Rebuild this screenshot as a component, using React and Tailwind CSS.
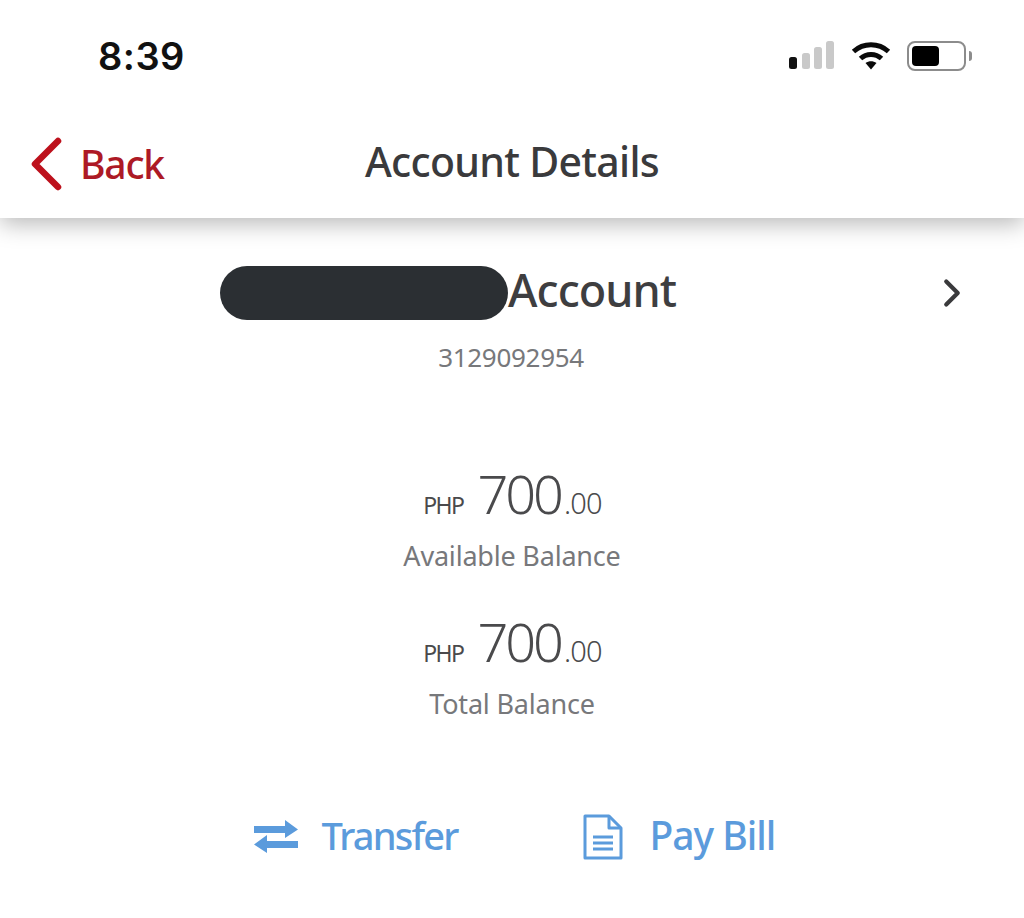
import { ChevronRight } from 'lucide-react'

const font = "font-['Noto_Sans',sans-serif]"

function SignalBars() {
  return (
    <svg width="46" height="30" viewBox="0 0 46 30">
      <rect x="0" y="16" width="8" height="12" rx="2.5" fill="#111" />
      <rect x="13" y="12" width="8" height="16" rx="2.5" fill="#c9c9c9" />
      <rect x="25" y="6" width="8" height="22" rx="2.5" fill="#c9c9c9" />
      <rect x="37" y="0" width="8" height="28" rx="2.5" fill="#c9c9c9" />
    </svg>
  )
}

function Wifi() {
  return (
    <svg width="40" height="30" viewBox="0 0 40 30" fill="none" stroke="#0a0a0a" strokeWidth="5">
      <path d="M2.5 10.5C12.5 1.5 27.5 1.5 37.5 10.5" />
      <path d="M9.5 17.5C15.5 12 24.5 12 30.5 17.5" />
      <path d="M14.5 22L20 28.5L25.5 22C22 19.5 18 19.5 14.5 22Z" fill="#0a0a0a" stroke="none" />
    </svg>
  )
}

function Battery() {
  return (
    <div className="flex items-center gap-[3px]">
      <div className="w-[59px] h-[30px] rounded-[8px] border-2 border-[#8c8c8c] p-[3px] flex">
        <div className="w-[27px] h-full rounded-[4px] bg-black" />
      </div>
      <div className="w-[3px] h-[10px] bg-[#8c8c8c] rounded-r-full" />
    </div>
  )
}

function TransferIcon() {
  return (
    <svg width="46" height="34" viewBox="0 0 46 34" fill="#5b9bdc">
      <path d="M1 6H32V0L45 9.5L32 18V13H1Z" />
      <path d="M45 21H14V15L1 24.5L14 33V28H45Z" />
    </svg>
  )
}

function BillIcon() {
  return (
    <svg width="40" height="46" viewBox="0 0 40 46" fill="none" stroke="#5b9bdc" strokeWidth="3" strokeLinejoin="round">
      <path d="M2 2H26L38 14V44H2Z" />
      <path d="M26 2V14H38" />
      <path d="M10 23H30M10 29H30M10 35H30" />
    </svg>
  )
}

function Balance({ label }) {
  return (
    <div className="flex flex-col items-center">
      <div className="flex items-baseline h-[60px] text-[#4a4a4c] -ml-[1px]">
        <span className="text-[23px] tracking-[-1.6px] mr-[14px] ml-[2px]">PHP</span>
        <span className="text-[54px] leading-[60px] tracking-[-3px] mr-[3px] font-light">700</span>
        <span className="text-[29px] tracking-[-0.8px] font-light">.00</span>
      </div>
      <div className="text-[27px] leading-[36px] text-[#77787b] tracking-[-0.2px] mt-[15px]">{label}</div>
    </div>
  )
}

export default function App() {
  return (
    <div className={`${font} w-[1024px] h-[918px] bg-white overflow-hidden`}>
      <header className="h-[218px] bg-white shadow-[0_6px_22px_rgba(0,0,0,0.28)] relative">
        <div className="h-[112px] flex items-center justify-between pl-[98px] pr-[52px]">
          <span className="font-['Inter',sans-serif] text-[38px] font-semibold text-[#111] tracking-[0.5px]">8:39</span>
          <div className="flex items-center gap-[16px]">
            <SignalBars />
            <Wifi />
            <Battery />
          </div>
        </div>
        <div className="relative h-[106px] flex items-center justify-center">
          <div className="absolute left-[30px] top-[23px] flex items-center gap-[17px]">
            <svg width="33" height="54" viewBox="0 0 33 54" fill="none" stroke="#bd111c" strokeWidth="6.5" strokeLinecap="round" strokeLinejoin="round">
              <path d="M28 4L5 27L28 50" />
            </svg>
            <span className="text-[39px] font-medium text-[#ad1a25] tracking-[-1.2px]">Back</span>
          </div>
          <h1 className="text-[41px] font-medium text-[#3a3a3c] tracking-[-0.7px] -mt-[6px]">Account Details</h1>
        </div>
      </header>

      <main className="flex flex-col items-center">
        <div className="relative w-full flex justify-center items-center h-[54px] mt-[48px]">
          <div className="flex items-center mr-[128px]">
            <div className="w-[288px] h-[54px] rounded-full bg-[#2b2f33]" />
            <span className="text-[45px] font-medium text-[#3e3e40] tracking-[-1px] -mt-[6px]">Account</span>
          </div>
          <ChevronRight className="absolute left-[929px] top-[4px]" size={46} strokeWidth={2.2} color="#3a3a3c" />
        </div>
        <div className="text-[26px] text-[#77787b] tracking-[-0.3px] mt-[20px] leading-[34px] -ml-[2px]">3129092954</div>

        <div className="mt-[89px] flex flex-col gap-[37px]">
          <Balance label="Available Balance" />
          <Balance label="Total Balance" />
        </div>

        <div className="flex items-center mt-[88px] text-[#5b9bdc] ml-[4px]">
          <TransferIcon />
          <span className="text-[38px] font-medium tracking-[-1.8px] ml-[23px] -mt-[4px]">Transfer</span>
          <div className="w-[126px]" />
          <BillIcon />
          <span className="text-[39px] font-medium tracking-[-1px] ml-[26px] -mt-[4px]">Pay Bill</span>
        </div>
      </main>
    </div>
  )
}
